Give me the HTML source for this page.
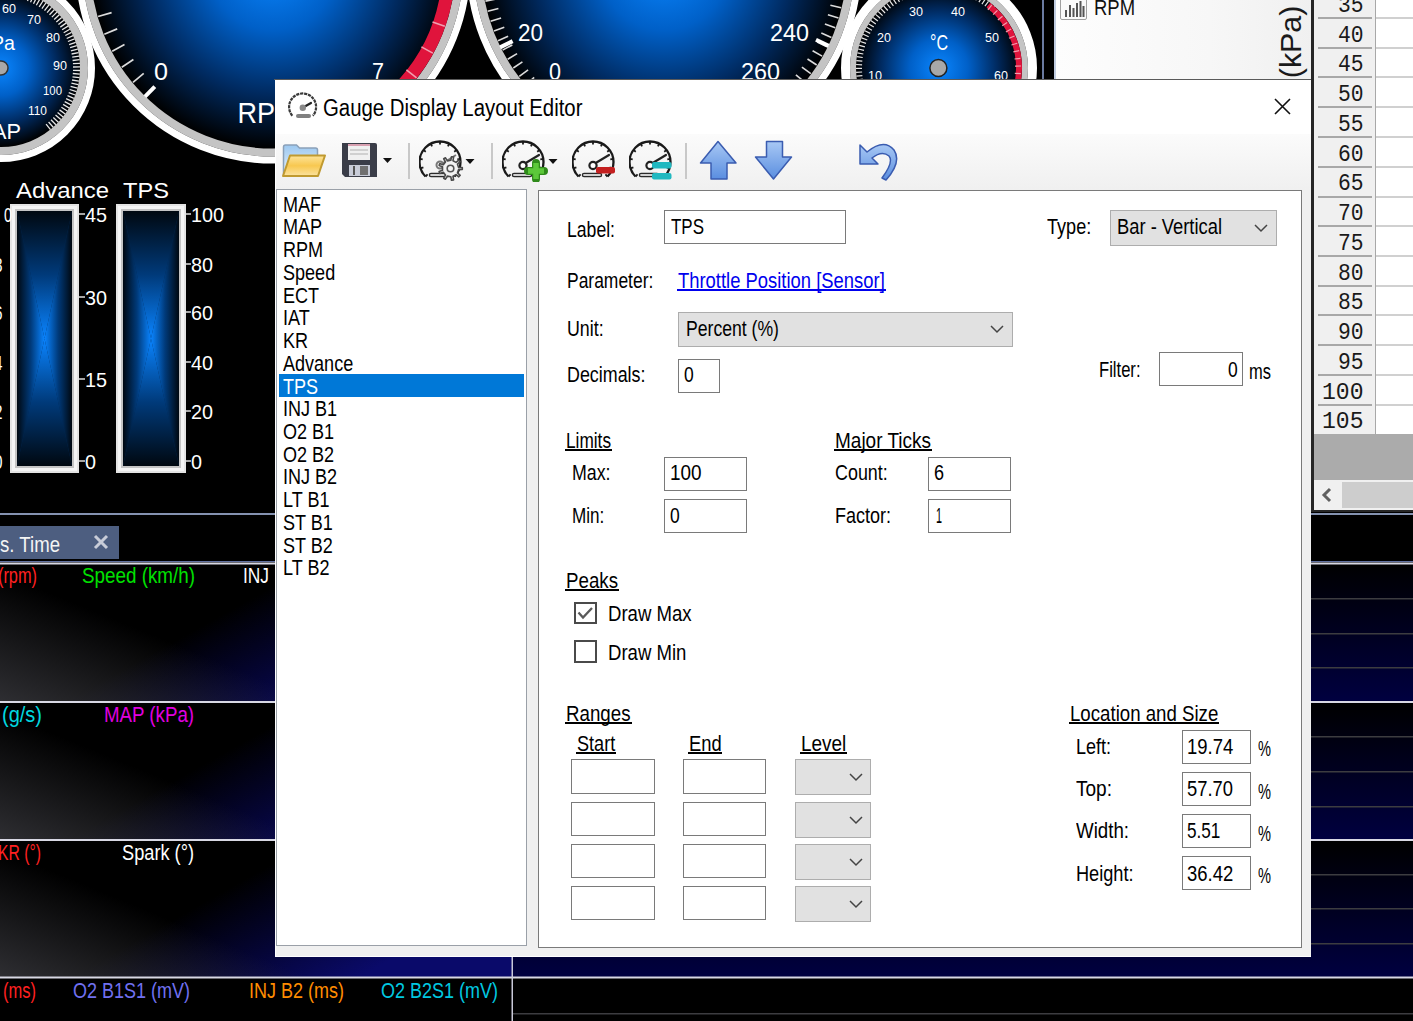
<!DOCTYPE html>
<html><head><meta charset="utf-8">
<style>
html,body{margin:0;padding:0;}
body{width:1413px;height:1021px;overflow:hidden;position:relative;background:#000;font-family:"Liberation Sans", sans-serif;}
.bg{position:absolute;left:0;top:0;}
.t{position:absolute;white-space:pre;transform-origin:0 50%;}
.b{position:absolute;box-sizing:border-box;}
</style></head><body>
<svg class="bg" width="1413" height="1021" font-family="Liberation Sans, sans-serif"><defs>
<radialGradient id="face" cx="50%" cy="50%" r="50%">
 <stop offset="0" stop-color="#0a86ff"/>
 <stop offset="0.35" stop-color="#0060c8"/>
 <stop offset="0.7" stop-color="#002a60"/>
 <stop offset="1" stop-color="#000"/>
</radialGradient>
<linearGradient id="bfv" x1="0" y1="0" x2="0" y2="1">
 <stop offset="0" stop-color="#000810"/>
 <stop offset="0.25" stop-color="#003a7a"/>
 <stop offset="0.5" stop-color="#0a84ff"/>
 <stop offset="0.75" stop-color="#003a7a"/>
 <stop offset="1" stop-color="#000810"/>
</linearGradient>
<linearGradient id="bfh" x1="0" y1="0" x2="1" y2="0">
 <stop offset="0" stop-color="#000810"/>
 <stop offset="0.25" stop-color="#003a7a"/>
 <stop offset="0.5" stop-color="#0a84ff"/>
 <stop offset="0.75" stop-color="#003a7a"/>
 <stop offset="1" stop-color="#000810"/>
</linearGradient>
<linearGradient id="barface" x1="0" y1="0" x2="0" y2="1">
 <stop offset="0" stop-color="#000"/>
 <stop offset="0.5" stop-color="#0a7cf0"/>
 <stop offset="1" stop-color="#000"/>
</linearGradient>
<linearGradient id="barside" x1="0" y1="0" x2="1" y2="0">
 <stop offset="0" stop-color="#000" stop-opacity="0.85"/>
 <stop offset="0.5" stop-color="#000" stop-opacity="0"/>
 <stop offset="1" stop-color="#000" stop-opacity="0.85"/>
</linearGradient>
<linearGradient id="gl" x1="0" y1="0" x2="1" y2="0">
 <stop offset="0" stop-color="#2e2e30"/>
 <stop offset="0.55" stop-color="#161640"/>
 <stop offset="1" stop-color="#000068"/>
</linearGradient>
<linearGradient id="gtop" x1="0" y1="0" x2="0" y2="1">
 <stop offset="0" stop-color="#000" stop-opacity="1"/>
 <stop offset="0.35" stop-color="#000" stop-opacity="1"/>
 <stop offset="1" stop-color="#000" stop-opacity="0"/>
</linearGradient>
<linearGradient id="gr" x1="0" y1="0" x2="0" y2="1">
 <stop offset="0" stop-color="#000000"/>
 <stop offset="1" stop-color="#000040"/>
</linearGradient>
<linearGradient id="panelL" x1="0" y1="0" x2="1" y2="0">
 <stop offset="0" stop-color="#fdfdfd"/>
 <stop offset="0.6" stop-color="#f7f7f7"/>
 <stop offset="1" stop-color="#f0f0f0"/>
</linearGradient>
</defs><rect x="0" y="0" width="1413" height="1021" fill="#000"/><circle cx="1" cy="68" r="79" fill="url(#face)"/><circle cx="1" cy="68" r="83.0" fill="none" stroke="#c4c4c4" stroke-width="8"/><circle cx="1" cy="68" r="90.5" fill="none" stroke="#fff" stroke-width="7"/><line x1="9.3" y1="-10.6" x2="8.5" y2="-3.6" stroke="#e8e8e8" stroke-width="1.3"/><line x1="12.8" y1="-10.1" x2="11.8" y2="-3.2" stroke="#e8e8e8" stroke-width="1.3"/><line x1="16.3" y1="-9.5" x2="15.0" y2="-2.6" stroke="#e8e8e8" stroke-width="1.3"/><line x1="19.8" y1="-8.7" x2="18.2" y2="-1.9" stroke="#e8e8e8" stroke-width="1.3"/><line x1="23.3" y1="-7.8" x2="21.3" y2="-1.1" stroke="#e8e8e8" stroke-width="1.3"/><line x1="26.7" y1="-6.7" x2="24.4" y2="-0.1" stroke="#e8e8e8" stroke-width="1.3"/><line x1="30.1" y1="-5.5" x2="27.5" y2="1.1" stroke="#e8e8e8" stroke-width="1.3"/><line x1="33.4" y1="-4.1" x2="30.5" y2="2.3" stroke="#e8e8e8" stroke-width="1.3"/><line x1="36.6" y1="-2.5" x2="33.5" y2="3.7" stroke="#e8e8e8" stroke-width="1.3"/><line x1="39.8" y1="-0.8" x2="36.3" y2="5.3" stroke="#e8e8e8" stroke-width="1.3"/><line x1="42.9" y1="1.0" x2="39.2" y2="6.9" stroke="#e8e8e8" stroke-width="1.3"/><line x1="45.9" y1="3.0" x2="41.9" y2="8.7" stroke="#e8e8e8" stroke-width="1.3"/><line x1="48.8" y1="5.1" x2="44.5" y2="10.6" stroke="#e8e8e8" stroke-width="1.3"/><line x1="51.6" y1="7.3" x2="47.1" y2="12.7" stroke="#e8e8e8" stroke-width="1.3"/><line x1="54.3" y1="9.7" x2="49.5" y2="14.8" stroke="#e8e8e8" stroke-width="1.3"/><line x1="56.9" y1="12.1" x2="51.9" y2="17.1" stroke="#e8e8e8" stroke-width="1.3"/><line x1="59.3" y1="14.7" x2="54.2" y2="19.5" stroke="#e8e8e8" stroke-width="1.3"/><line x1="61.7" y1="17.4" x2="56.3" y2="21.9" stroke="#e8e8e8" stroke-width="1.3"/><line x1="63.9" y1="20.2" x2="58.4" y2="24.5" stroke="#e8e8e8" stroke-width="1.3"/><line x1="66.0" y1="23.1" x2="60.3" y2="27.1" stroke="#e8e8e8" stroke-width="1.3"/><line x1="68.0" y1="26.1" x2="62.1" y2="29.8" stroke="#e8e8e8" stroke-width="1.3"/><line x1="69.8" y1="29.2" x2="63.7" y2="32.7" stroke="#e8e8e8" stroke-width="1.3"/><line x1="71.5" y1="32.4" x2="65.3" y2="35.5" stroke="#e8e8e8" stroke-width="1.3"/><line x1="73.1" y1="35.6" x2="66.7" y2="38.5" stroke="#e8e8e8" stroke-width="1.3"/><line x1="74.5" y1="38.9" x2="67.9" y2="41.5" stroke="#e8e8e8" stroke-width="1.3"/><line x1="75.7" y1="42.3" x2="69.1" y2="44.6" stroke="#e8e8e8" stroke-width="1.3"/><line x1="76.8" y1="45.7" x2="70.1" y2="47.7" stroke="#e8e8e8" stroke-width="1.3"/><line x1="77.7" y1="49.2" x2="70.9" y2="50.8" stroke="#e8e8e8" stroke-width="1.3"/><line x1="78.5" y1="52.7" x2="71.6" y2="54.0" stroke="#e8e8e8" stroke-width="1.3"/><line x1="79.1" y1="56.2" x2="72.2" y2="57.2" stroke="#e8e8e8" stroke-width="1.3"/><line x1="79.6" y1="59.7" x2="72.6" y2="60.5" stroke="#e8e8e8" stroke-width="1.3"/><line x1="79.9" y1="63.3" x2="72.9" y2="63.7" stroke="#e8e8e8" stroke-width="1.3"/><line x1="80.0" y1="66.9" x2="73.0" y2="67.0" stroke="#e8e8e8" stroke-width="1.3"/><line x1="80.0" y1="70.5" x2="73.0" y2="70.3" stroke="#e8e8e8" stroke-width="1.3"/><line x1="79.8" y1="74.1" x2="72.8" y2="73.5" stroke="#e8e8e8" stroke-width="1.3"/><line x1="79.4" y1="77.6" x2="72.5" y2="76.8" stroke="#e8e8e8" stroke-width="1.3"/><line x1="78.9" y1="81.2" x2="72.0" y2="80.0" stroke="#e8e8e8" stroke-width="1.3"/><line x1="78.2" y1="84.7" x2="71.4" y2="83.2" stroke="#e8e8e8" stroke-width="1.3"/><line x1="77.4" y1="88.2" x2="70.6" y2="86.4" stroke="#e8e8e8" stroke-width="1.3"/><line x1="76.4" y1="91.6" x2="69.7" y2="89.5" stroke="#e8e8e8" stroke-width="1.3"/><line x1="75.2" y1="95.0" x2="68.7" y2="92.6" stroke="#e8e8e8" stroke-width="1.3"/><line x1="73.9" y1="98.4" x2="67.5" y2="95.7" stroke="#e8e8e8" stroke-width="1.3"/><line x1="72.5" y1="101.6" x2="66.1" y2="98.7" stroke="#e8e8e8" stroke-width="1.3"/><line x1="70.9" y1="104.8" x2="64.7" y2="101.6" stroke="#e8e8e8" stroke-width="1.3"/><line x1="69.1" y1="108.0" x2="63.1" y2="104.4" stroke="#e8e8e8" stroke-width="1.3"/><line x1="67.3" y1="111.0" x2="61.4" y2="107.2" stroke="#e8e8e8" stroke-width="1.3"/><line x1="65.2" y1="114.0" x2="59.5" y2="109.9" stroke="#e8e8e8" stroke-width="1.3"/><line x1="63.1" y1="116.9" x2="57.6" y2="112.5" stroke="#e8e8e8" stroke-width="1.3"/><line x1="60.8" y1="119.6" x2="55.5" y2="115.0" stroke="#e8e8e8" stroke-width="1.3"/><line x1="58.4" y1="122.3" x2="53.3" y2="117.5" stroke="#e8e8e8" stroke-width="1.3"/><line x1="55.9" y1="124.8" x2="51.0" y2="119.8" stroke="#e8e8e8" stroke-width="1.3"/><line x1="53.2" y1="127.3" x2="48.6" y2="122.0" stroke="#e8e8e8" stroke-width="1.3"/><line x1="50.5" y1="129.6" x2="46.1" y2="124.1" stroke="#e8e8e8" stroke-width="1.3"/><circle cx="1" cy="68" r="7" fill="#a8a8a8" stroke="#333" stroke-width="1.5"/><text x="2" y="13" font-size="13" fill="#fff" text-anchor="start" textLength="14" lengthAdjust="spacingAndGlyphs">60</text><text x="27" y="24" font-size="13" fill="#fff" text-anchor="start" textLength="14" lengthAdjust="spacingAndGlyphs">70</text><text x="46" y="42" font-size="13" fill="#fff" text-anchor="start" textLength="14" lengthAdjust="spacingAndGlyphs">80</text><text x="53" y="70" font-size="13" fill="#fff" text-anchor="start" textLength="14" lengthAdjust="spacingAndGlyphs">90</text><text x="43" y="95" font-size="13" fill="#fff" text-anchor="start" textLength="19" lengthAdjust="spacingAndGlyphs">100</text><text x="28" y="115" font-size="13" fill="#fff" text-anchor="start" textLength="19" lengthAdjust="spacingAndGlyphs">110</text><text x="-9" y="50" font-size="21" fill="#fff" text-anchor="start" textLength="24" lengthAdjust="spacingAndGlyphs">Pa</text><text x="-8" y="139" font-size="22" fill="#fff" text-anchor="start" textLength="29" lengthAdjust="spacingAndGlyphs">AP</text><circle cx="273" cy="-34" r="182.6" fill="url(#face)"/><circle cx="273" cy="-34" r="186.6" fill="none" stroke="#c4c4c4" stroke-width="8"/><circle cx="273" cy="-34" r="194.1" fill="none" stroke="#fff" stroke-width="7"/><line x1="133.0" y1="82.3" x2="143.7" y2="73.3" stroke="#dcdcdc" stroke-width="1.7"/><line x1="121.8" y1="67.2" x2="133.4" y2="59.5" stroke="#dcdcdc" stroke-width="1.7"/><line x1="112.2" y1="51.2" x2="124.5" y2="44.6" stroke="#dcdcdc" stroke-width="1.7"/><line x1="104.3" y1="34.2" x2="117.2" y2="28.9" stroke="#dcdcdc" stroke-width="1.7"/><line x1="98.1" y1="16.5" x2="111.6" y2="12.6" stroke="#dcdcdc" stroke-width="1.7"/><line x1="93.9" y1="-1.8" x2="107.7" y2="-4.2" stroke="#dcdcdc" stroke-width="1.7"/><line x1="91.5" y1="-20.4" x2="105.5" y2="-21.4" stroke="#dcdcdc" stroke-width="1.7"/><line x1="145.0" y1="96.7" x2="154.8" y2="86.7" stroke="#fff" stroke-width="4"/><path d="M447.3 -9.5 A176 176 0 0 1 318.6 136.0" fill="none" stroke="#e0143c" stroke-width="13"/><line x1="452.2" y1="-2.4" x2="439.4" y2="-4.7" stroke="#f0a0b0" stroke-width="1.6"/><line x1="444.8" y1="26.2" x2="432.5" y2="21.9" stroke="#f0a0b0" stroke-width="1.6"/><line x1="432.8" y1="53.1" x2="421.4" y2="46.9" stroke="#f0a0b0" stroke-width="1.6"/><line x1="416.6" y1="77.8" x2="406.4" y2="69.8" stroke="#f0a0b0" stroke-width="1.6"/><line x1="396.7" y1="99.5" x2="387.8" y2="90.0" stroke="#f0a0b0" stroke-width="1.6"/><line x1="373.5" y1="117.8" x2="366.3" y2="106.9" stroke="#f0a0b0" stroke-width="1.6"/><line x1="347.6" y1="132.0" x2="342.3" y2="120.1" stroke="#f0a0b0" stroke-width="1.6"/><text x="154" y="80" font-size="24" fill="#fff" text-anchor="start" textLength="14" lengthAdjust="spacingAndGlyphs">0</text><text x="372" y="80" font-size="24" fill="#fff" text-anchor="start" textLength="12" lengthAdjust="spacingAndGlyphs">7</text><text x="237.5" y="123.2" font-size="30" fill="#fff" text-anchor="start" textLength="60" lengthAdjust="spacingAndGlyphs">RPM</text><circle cx="664" cy="-34" r="182.6" fill="url(#face)"/><circle cx="664" cy="-34" r="186.6" fill="none" stroke="#c4c4c4" stroke-width="8"/><circle cx="664" cy="-34" r="194.1" fill="none" stroke="#fff" stroke-width="7"/><line x1="632.4" y1="145.2" x2="634.3" y2="134.4" stroke="#dcdcdc" stroke-width="1.6"/><line x1="622.2" y1="143.1" x2="624.7" y2="132.4" stroke="#dcdcdc" stroke-width="1.6"/><line x1="612.1" y1="140.5" x2="615.3" y2="129.9" stroke="#dcdcdc" stroke-width="1.6"/><line x1="602.2" y1="137.2" x2="606.0" y2="126.9" stroke="#dcdcdc" stroke-width="1.6"/><line x1="592.5" y1="133.4" x2="596.9" y2="123.3" stroke="#dcdcdc" stroke-width="1.6"/><line x1="583.1" y1="129.0" x2="588.0" y2="119.2" stroke="#dcdcdc" stroke-width="1.6"/><line x1="573.9" y1="124.1" x2="579.3" y2="114.6" stroke="#dcdcdc" stroke-width="1.6"/><line x1="565.0" y1="118.7" x2="571.0" y2="109.5" stroke="#dcdcdc" stroke-width="1.6"/><line x1="556.4" y1="112.8" x2="562.9" y2="103.9" stroke="#dcdcdc" stroke-width="1.6"/><line x1="548.2" y1="106.4" x2="555.2" y2="97.9" stroke="#dcdcdc" stroke-width="1.6"/><line x1="540.3" y1="99.5" x2="547.8" y2="91.5" stroke="#dcdcdc" stroke-width="1.6"/><line x1="532.9" y1="92.2" x2="540.8" y2="84.6" stroke="#dcdcdc" stroke-width="1.6"/><line x1="525.9" y1="84.5" x2="534.2" y2="77.4" stroke="#dcdcdc" stroke-width="1.6"/><line x1="519.3" y1="76.4" x2="528.1" y2="69.8" stroke="#dcdcdc" stroke-width="1.6"/><line x1="513.3" y1="68.0" x2="522.4" y2="61.8" stroke="#dcdcdc" stroke-width="1.6"/><line x1="507.7" y1="59.2" x2="517.1" y2="53.6" stroke="#dcdcdc" stroke-width="1.6"/><line x1="502.6" y1="50.1" x2="512.3" y2="45.0" stroke="#dcdcdc" stroke-width="1.6"/><line x1="498.0" y1="40.7" x2="508.1" y2="36.2" stroke="#dcdcdc" stroke-width="1.6"/><line x1="494.0" y1="31.1" x2="504.3" y2="27.2" stroke="#dcdcdc" stroke-width="1.6"/><line x1="490.6" y1="21.3" x2="501.1" y2="17.9" stroke="#dcdcdc" stroke-width="1.6"/><line x1="487.7" y1="11.3" x2="498.4" y2="8.5" stroke="#dcdcdc" stroke-width="1.6"/><line x1="485.4" y1="1.1" x2="496.2" y2="-1.0" stroke="#dcdcdc" stroke-width="1.6"/><line x1="843.2" y1="-2.4" x2="832.4" y2="-4.3" stroke="#dcdcdc" stroke-width="1.6"/><line x1="841.1" y1="7.8" x2="830.4" y2="5.3" stroke="#dcdcdc" stroke-width="1.6"/><line x1="838.5" y1="17.9" x2="827.9" y2="14.7" stroke="#dcdcdc" stroke-width="1.6"/><line x1="835.2" y1="27.8" x2="824.9" y2="24.0" stroke="#dcdcdc" stroke-width="1.6"/><line x1="831.4" y1="37.5" x2="821.3" y2="33.1" stroke="#dcdcdc" stroke-width="1.6"/><line x1="827.0" y1="46.9" x2="817.2" y2="42.0" stroke="#dcdcdc" stroke-width="1.6"/><line x1="822.1" y1="56.1" x2="812.6" y2="50.7" stroke="#dcdcdc" stroke-width="1.6"/><line x1="816.7" y1="65.0" x2="807.5" y2="59.0" stroke="#dcdcdc" stroke-width="1.6"/><line x1="810.8" y1="73.6" x2="801.9" y2="67.1" stroke="#dcdcdc" stroke-width="1.6"/><line x1="804.4" y1="81.8" x2="795.9" y2="74.8" stroke="#dcdcdc" stroke-width="1.6"/><line x1="797.5" y1="89.7" x2="789.5" y2="82.2" stroke="#dcdcdc" stroke-width="1.6"/><line x1="790.2" y1="97.1" x2="782.6" y2="89.2" stroke="#dcdcdc" stroke-width="1.6"/><line x1="782.5" y1="104.1" x2="775.4" y2="95.8" stroke="#dcdcdc" stroke-width="1.6"/><line x1="774.4" y1="110.7" x2="767.8" y2="101.9" stroke="#dcdcdc" stroke-width="1.6"/><line x1="766.0" y1="116.7" x2="759.8" y2="107.6" stroke="#dcdcdc" stroke-width="1.6"/><line x1="757.2" y1="122.3" x2="751.6" y2="112.9" stroke="#dcdcdc" stroke-width="1.6"/><line x1="748.1" y1="127.4" x2="743.0" y2="117.7" stroke="#dcdcdc" stroke-width="1.6"/><line x1="738.7" y1="132.0" x2="734.2" y2="121.9" stroke="#dcdcdc" stroke-width="1.6"/><line x1="729.1" y1="136.0" x2="725.2" y2="125.7" stroke="#dcdcdc" stroke-width="1.6"/><line x1="719.3" y1="139.4" x2="715.9" y2="128.9" stroke="#dcdcdc" stroke-width="1.6"/><line x1="709.3" y1="142.3" x2="706.5" y2="131.6" stroke="#dcdcdc" stroke-width="1.6"/><line x1="699.1" y1="144.6" x2="697.0" y2="133.8" stroke="#dcdcdc" stroke-width="1.6"/><line x1="500.1" y1="47.4" x2="512.6" y2="41.1" stroke="#fff" stroke-width="4"/><line x1="828.6" y1="45.9" x2="816.0" y2="39.8" stroke="#fff" stroke-width="4"/><text x="518" y="41" font-size="24" fill="#fff" text-anchor="start" textLength="25" lengthAdjust="spacingAndGlyphs">20</text><text x="549" y="80" font-size="24" fill="#fff" text-anchor="start" textLength="12" lengthAdjust="spacingAndGlyphs">0</text><text x="770" y="41" font-size="24" fill="#fff" text-anchor="start" textLength="39" lengthAdjust="spacingAndGlyphs">240</text><text x="741" y="80" font-size="24" fill="#fff" text-anchor="start" textLength="39" lengthAdjust="spacingAndGlyphs">260</text><circle cx="939" cy="68" r="83" fill="url(#face)"/><circle cx="939" cy="68" r="86.0" fill="none" stroke="#c4c4c4" stroke-width="6"/><circle cx="939" cy="68" r="93.5" fill="none" stroke="#fff" stroke-width="9"/><line x1="867.1" y1="109.5" x2="872.3" y2="106.5" stroke="#e8e8e8" stroke-width="1.2"/><line x1="865.2" y1="106.1" x2="870.6" y2="103.3" stroke="#e8e8e8" stroke-width="1.2"/><line x1="863.5" y1="102.6" x2="869.0" y2="100.1" stroke="#e8e8e8" stroke-width="1.2"/><line x1="862.0" y1="99.0" x2="867.6" y2="96.7" stroke="#e8e8e8" stroke-width="1.2"/><line x1="860.6" y1="95.3" x2="866.3" y2="93.3" stroke="#e8e8e8" stroke-width="1.2"/><line x1="859.4" y1="91.6" x2="865.2" y2="89.9" stroke="#e8e8e8" stroke-width="1.2"/><line x1="858.4" y1="87.8" x2="864.2" y2="86.4" stroke="#e8e8e8" stroke-width="1.2"/><line x1="857.6" y1="84.0" x2="863.4" y2="82.8" stroke="#e8e8e8" stroke-width="1.2"/><line x1="856.9" y1="80.1" x2="862.8" y2="79.2" stroke="#e8e8e8" stroke-width="1.2"/><line x1="856.4" y1="76.2" x2="862.4" y2="75.6" stroke="#e8e8e8" stroke-width="1.2"/><line x1="856.1" y1="72.3" x2="862.1" y2="72.0" stroke="#e8e8e8" stroke-width="1.2"/><line x1="856.0" y1="68.4" x2="862.0" y2="68.4" stroke="#e8e8e8" stroke-width="1.2"/><line x1="856.1" y1="64.5" x2="862.1" y2="64.8" stroke="#e8e8e8" stroke-width="1.2"/><line x1="856.3" y1="60.6" x2="862.3" y2="61.2" stroke="#e8e8e8" stroke-width="1.2"/><line x1="856.8" y1="56.7" x2="862.7" y2="57.5" stroke="#e8e8e8" stroke-width="1.2"/><line x1="857.4" y1="52.9" x2="863.3" y2="54.0" stroke="#e8e8e8" stroke-width="1.2"/><line x1="858.2" y1="49.0" x2="864.0" y2="50.4" stroke="#e8e8e8" stroke-width="1.2"/><line x1="859.2" y1="45.3" x2="864.9" y2="46.9" stroke="#e8e8e8" stroke-width="1.2"/><line x1="860.3" y1="41.5" x2="866.0" y2="43.4" stroke="#e8e8e8" stroke-width="1.2"/><line x1="861.7" y1="37.9" x2="867.3" y2="40.0" stroke="#e8e8e8" stroke-width="1.2"/><line x1="863.2" y1="34.2" x2="868.7" y2="36.7" stroke="#e8e8e8" stroke-width="1.2"/><line x1="864.9" y1="30.7" x2="870.2" y2="33.4" stroke="#e8e8e8" stroke-width="1.2"/><line x1="866.7" y1="27.3" x2="871.9" y2="30.2" stroke="#e8e8e8" stroke-width="1.2"/><line x1="868.7" y1="23.9" x2="873.8" y2="27.1" stroke="#e8e8e8" stroke-width="1.2"/><line x1="870.8" y1="20.6" x2="875.8" y2="24.1" stroke="#e8e8e8" stroke-width="1.2"/><line x1="873.2" y1="17.5" x2="877.9" y2="21.1" stroke="#e8e8e8" stroke-width="1.2"/><line x1="875.6" y1="14.4" x2="880.2" y2="18.3" stroke="#e8e8e8" stroke-width="1.2"/><line x1="878.2" y1="11.5" x2="882.6" y2="15.6" stroke="#e8e8e8" stroke-width="1.2"/><line x1="880.9" y1="8.7" x2="885.1" y2="13.0" stroke="#e8e8e8" stroke-width="1.2"/><line x1="883.8" y1="6.0" x2="887.8" y2="10.5" stroke="#e8e8e8" stroke-width="1.2"/><line x1="886.8" y1="3.5" x2="890.5" y2="8.2" stroke="#e8e8e8" stroke-width="1.2"/><line x1="889.9" y1="1.1" x2="893.4" y2="5.9" stroke="#e8e8e8" stroke-width="1.2"/><line x1="893.1" y1="-1.1" x2="896.4" y2="3.9" stroke="#e8e8e8" stroke-width="1.2"/><line x1="896.4" y1="-3.2" x2="899.5" y2="1.9" stroke="#e8e8e8" stroke-width="1.2"/><line x1="899.8" y1="-5.1" x2="902.6" y2="0.1" stroke="#e8e8e8" stroke-width="1.2"/><line x1="903.3" y1="-6.9" x2="905.9" y2="-1.5" stroke="#e8e8e8" stroke-width="1.2"/><line x1="906.8" y1="-8.5" x2="909.2" y2="-3.0" stroke="#e8e8e8" stroke-width="1.2"/><line x1="910.5" y1="-9.9" x2="912.5" y2="-4.3" stroke="#e8e8e8" stroke-width="1.2"/><line x1="914.2" y1="-11.2" x2="916.0" y2="-5.5" stroke="#e8e8e8" stroke-width="1.2"/><line x1="917.9" y1="-12.3" x2="919.5" y2="-6.5" stroke="#e8e8e8" stroke-width="1.2"/><line x1="921.7" y1="-13.2" x2="923.0" y2="-7.3" stroke="#e8e8e8" stroke-width="1.2"/><line x1="925.6" y1="-13.9" x2="926.6" y2="-8.0" stroke="#e8e8e8" stroke-width="1.2"/><line x1="929.5" y1="-14.4" x2="930.1" y2="-8.5" stroke="#e8e8e8" stroke-width="1.2"/><line x1="933.4" y1="-14.8" x2="933.8" y2="-8.8" stroke="#e8e8e8" stroke-width="1.2"/><line x1="937.3" y1="-15.0" x2="937.4" y2="-9.0" stroke="#e8e8e8" stroke-width="1.2"/><line x1="941.2" y1="-15.0" x2="941.0" y2="-9.0" stroke="#e8e8e8" stroke-width="1.2"/><line x1="945.1" y1="-14.8" x2="944.6" y2="-8.8" stroke="#e8e8e8" stroke-width="1.2"/><line x1="949.0" y1="-14.4" x2="948.3" y2="-8.4" stroke="#e8e8e8" stroke-width="1.2"/><line x1="952.8" y1="-13.8" x2="951.8" y2="-7.9" stroke="#e8e8e8" stroke-width="1.2"/><line x1="956.7" y1="-13.1" x2="955.4" y2="-7.2" stroke="#e8e8e8" stroke-width="1.2"/><line x1="960.5" y1="-12.2" x2="958.9" y2="-6.4" stroke="#e8e8e8" stroke-width="1.2"/><line x1="964.2" y1="-11.1" x2="962.4" y2="-5.4" stroke="#e8e8e8" stroke-width="1.2"/><line x1="967.9" y1="-9.8" x2="965.8" y2="-4.2" stroke="#e8e8e8" stroke-width="1.2"/><line x1="971.6" y1="-8.3" x2="969.2" y2="-2.8" stroke="#e8e8e8" stroke-width="1.2"/><line x1="975.1" y1="-6.7" x2="972.5" y2="-1.3" stroke="#e8e8e8" stroke-width="1.2"/><line x1="978.6" y1="-4.9" x2="975.7" y2="0.3" stroke="#e8e8e8" stroke-width="1.2"/><line x1="982.0" y1="-3.0" x2="978.9" y2="2.1" stroke="#e8e8e8" stroke-width="1.2"/><line x1="985.3" y1="-0.9" x2="981.9" y2="4.1" stroke="#e8e8e8" stroke-width="1.2"/><line x1="988.5" y1="1.4" x2="984.9" y2="6.2" stroke="#e8e8e8" stroke-width="1.2"/><line x1="991.6" y1="3.8" x2="987.8" y2="8.4" stroke="#e8e8e8" stroke-width="1.2"/><line x1="994.5" y1="6.3" x2="990.5" y2="10.8" stroke="#e8e8e8" stroke-width="1.2"/><path d="M988.3 5.0 A80 80 0 0 1 1016.6 87.4" fill="none" stroke="#e0143c" stroke-width="6"/><line x1="991.7" y1="5.2" x2="987.9" y2="9.8" stroke="#f4a0b0" stroke-width="1.2"/><line x1="997.4" y1="10.4" x2="993.1" y2="14.6" stroke="#f4a0b0" stroke-width="1.2"/><line x1="1002.5" y1="16.2" x2="997.9" y2="20.0" stroke="#f4a0b0" stroke-width="1.2"/><line x1="1007.1" y1="22.4" x2="1002.2" y2="25.7" stroke="#f4a0b0" stroke-width="1.2"/><line x1="1011.1" y1="29.0" x2="1005.9" y2="31.9" stroke="#f4a0b0" stroke-width="1.2"/><line x1="1014.5" y1="36.0" x2="1009.0" y2="38.3" stroke="#f4a0b0" stroke-width="1.2"/><line x1="1017.2" y1="43.2" x2="1011.4" y2="45.0" stroke="#f4a0b0" stroke-width="1.2"/><line x1="1019.1" y1="50.7" x2="1013.3" y2="51.9" stroke="#f4a0b0" stroke-width="1.2"/><line x1="1020.4" y1="58.3" x2="1014.5" y2="59.0" stroke="#f4a0b0" stroke-width="1.2"/><line x1="1021.0" y1="66.0" x2="1015.0" y2="66.1" stroke="#f4a0b0" stroke-width="1.2"/><line x1="1020.8" y1="73.7" x2="1014.8" y2="73.3" stroke="#f4a0b0" stroke-width="1.2"/><line x1="1019.9" y1="81.4" x2="1014.0" y2="80.4" stroke="#f4a0b0" stroke-width="1.2"/><circle cx="938.4" cy="68" r="8.5" fill="#a8a8a8" stroke="#222" stroke-width="1.5"/><text x="909" y="16" font-size="13" fill="#fff" text-anchor="start" textLength="14" lengthAdjust="spacingAndGlyphs">30</text><text x="951" y="16" font-size="13" fill="#fff" text-anchor="start" textLength="14" lengthAdjust="spacingAndGlyphs">40</text><text x="877" y="42" font-size="13" fill="#fff" text-anchor="start" textLength="14" lengthAdjust="spacingAndGlyphs">20</text><text x="985" y="42" font-size="13" fill="#fff" text-anchor="start" textLength="14" lengthAdjust="spacingAndGlyphs">50</text><text x="868" y="80" font-size="13" fill="#fff" text-anchor="start" textLength="14" lengthAdjust="spacingAndGlyphs">10</text><text x="994" y="80" font-size="13" fill="#fff" text-anchor="start" textLength="14" lengthAdjust="spacingAndGlyphs">60</text><text x="930" y="50" font-size="22" fill="#fff" text-anchor="start" textLength="18" lengthAdjust="spacingAndGlyphs">°C</text><rect x="10" y="204" width="69" height="269" fill="#e4e4e4"/><rect x="12" y="206" width="65" height="265" fill="#f4f4f4"/><rect x="15" y="209" width="59" height="259" fill="#c4c4c4"/><rect x="17" y="211" width="55" height="255" fill="#002550"/><path d="M17 211 L72 211 L44.5 338.5 Z M17 466 L72 466 L44.5 338.5 Z" fill="url(#bfv)"/><path d="M17 211 L17 466 L44.5 338.5 Z M72 211 L72 466 L44.5 338.5 Z" fill="url(#bfh)"/><rect x="116" y="204" width="70" height="269" fill="#e4e4e4"/><rect x="118" y="206" width="66" height="265" fill="#f4f4f4"/><rect x="121" y="209" width="60" height="259" fill="#c4c4c4"/><rect x="123" y="211" width="56" height="255" fill="#002550"/><path d="M123 211 L179 211 L151.0 338.5 Z M123 466 L179 466 L151.0 338.5 Z" fill="url(#bfv)"/><path d="M123 211 L123 466 L151.0 338.5 Z M179 211 L179 466 L151.0 338.5 Z" fill="url(#bfh)"/><text x="16" y="198" font-size="22" fill="#fff" text-anchor="start" textLength="93" lengthAdjust="spacingAndGlyphs">Advance</text><text x="123" y="198" font-size="22" fill="#fff" text-anchor="start" textLength="46" lengthAdjust="spacingAndGlyphs">TPS</text><line x1="79" y1="214" x2="85" y2="214" stroke="#ddd" stroke-width="1.5"/><text x="85" y="222" font-size="21" fill="#fff" text-anchor="start" textLength="22" lengthAdjust="spacingAndGlyphs">45</text><line x1="79" y1="297" x2="85" y2="297" stroke="#ddd" stroke-width="1.5"/><text x="85" y="305" font-size="21" fill="#fff" text-anchor="start" textLength="22" lengthAdjust="spacingAndGlyphs">30</text><line x1="79" y1="379" x2="85" y2="379" stroke="#ddd" stroke-width="1.5"/><text x="85" y="387" font-size="21" fill="#fff" text-anchor="start" textLength="22" lengthAdjust="spacingAndGlyphs">15</text><line x1="79" y1="461" x2="85" y2="461" stroke="#ddd" stroke-width="1.5"/><text x="85" y="469" font-size="21" fill="#fff" text-anchor="start" textLength="11" lengthAdjust="spacingAndGlyphs">0</text><line x1="186" y1="214" x2="191" y2="214" stroke="#ddd" stroke-width="1.5"/><text x="191" y="222" font-size="21" fill="#fff" text-anchor="start" textLength="33" lengthAdjust="spacingAndGlyphs">100</text><line x1="186" y1="264" x2="191" y2="264" stroke="#ddd" stroke-width="1.5"/><text x="191" y="272" font-size="21" fill="#fff" text-anchor="start" textLength="22" lengthAdjust="spacingAndGlyphs">80</text><line x1="186" y1="312" x2="191" y2="312" stroke="#ddd" stroke-width="1.5"/><text x="191" y="320" font-size="21" fill="#fff" text-anchor="start" textLength="22" lengthAdjust="spacingAndGlyphs">60</text><line x1="186" y1="362" x2="191" y2="362" stroke="#ddd" stroke-width="1.5"/><text x="191" y="370" font-size="21" fill="#fff" text-anchor="start" textLength="22" lengthAdjust="spacingAndGlyphs">40</text><line x1="186" y1="411" x2="191" y2="411" stroke="#ddd" stroke-width="1.5"/><text x="191" y="419" font-size="21" fill="#fff" text-anchor="start" textLength="22" lengthAdjust="spacingAndGlyphs">20</text><line x1="186" y1="461" x2="191" y2="461" stroke="#ddd" stroke-width="1.5"/><text x="191" y="469" font-size="21" fill="#fff" text-anchor="start" textLength="11" lengthAdjust="spacingAndGlyphs">0</text><text x="4" y="222" font-size="21" fill="#fff" text-anchor="start" textLength="8" lengthAdjust="spacingAndGlyphs">0</text><text x="-6" y="272" font-size="21" fill="#fff" text-anchor="start" textLength="8.5" lengthAdjust="spacingAndGlyphs">8</text><text x="-6" y="320" font-size="21" fill="#fff" text-anchor="start" textLength="8.5" lengthAdjust="spacingAndGlyphs">6</text><text x="-6" y="370" font-size="21" fill="#fff" text-anchor="start" textLength="8.5" lengthAdjust="spacingAndGlyphs">4</text><text x="-6" y="419" font-size="21" fill="#fff" text-anchor="start" textLength="8.5" lengthAdjust="spacingAndGlyphs">2</text><text x="-6" y="469" font-size="21" fill="#fff" text-anchor="start" textLength="8.5" lengthAdjust="spacingAndGlyphs">0</text><rect x="1042" y="0" width="2" height="80" fill="#6a7aa0"/><rect x="1054" y="0" width="2" height="80" fill="#c0cce0"/><rect x="1056" y="0" width="256" height="80" fill="url(#panelL)"/><text transform="translate(1301.3,78.2) rotate(-90)" font-size="30" fill="#1a1a1a" textLength="72.5" lengthAdjust="spacingAndGlyphs">(kPa)</text><rect x="0" y="513" width="1413" height="2" fill="#8492b0"/><rect x="0" y="526" width="119" height="33" fill="#4d5e80"/><text x="0" y="552" font-size="22" fill="#f4f4f4" text-anchor="start" textLength="60" lengthAdjust="spacingAndGlyphs">s. Time</text><path d="M95 536 L107 548 M107 536 L95 548" stroke="#c8ccd8" stroke-width="3"/><rect x="0" y="561" width="1413" height="1" fill="#6070a0"/><linearGradient id="ga563" gradientUnits="userSpaceOnUse" x1="45" y1="591" x2="0" y2="702">
 <stop offset="0" stop-color="#2e2e32" stop-opacity="0"/><stop offset="1" stop-color="#2e2e32" stop-opacity="1"/></linearGradient>
<linearGradient id="gb563" gradientUnits="userSpaceOnUse" x1="270" y1="588" x2="340" y2="714">
 <stop offset="0" stop-color="#0a0a6a" stop-opacity="0"/><stop offset="1" stop-color="#0a0a6a" stop-opacity="1"/></linearGradient><rect x="0" y="563" width="512" height="139" fill="#000"/><rect x="0" y="563" width="512" height="139" fill="url(#gb563)"/><rect x="0" y="563" width="512" height="139" fill="url(#ga563)"/><rect x="513" y="563" width="900" height="139" fill="url(#gr)"/><rect x="513" y="598" width="900" height="1.5" fill="#3c3c40"/><rect x="513" y="633" width="900" height="1.5" fill="#3c3c40"/><rect x="513" y="667" width="900" height="1.5" fill="#3c3c40"/><linearGradient id="ga702" gradientUnits="userSpaceOnUse" x1="45" y1="730" x2="0" y2="840">
 <stop offset="0" stop-color="#2e2e32" stop-opacity="0"/><stop offset="1" stop-color="#2e2e32" stop-opacity="1"/></linearGradient>
<linearGradient id="gb702" gradientUnits="userSpaceOnUse" x1="270" y1="727" x2="340" y2="852">
 <stop offset="0" stop-color="#0a0a6a" stop-opacity="0"/><stop offset="1" stop-color="#0a0a6a" stop-opacity="1"/></linearGradient><rect x="0" y="702" width="512" height="138" fill="#000"/><rect x="0" y="702" width="512" height="138" fill="url(#gb702)"/><rect x="0" y="702" width="512" height="138" fill="url(#ga702)"/><rect x="513" y="702" width="900" height="138" fill="url(#gr)"/><rect x="513" y="736" width="900" height="1.5" fill="#3c3c40"/><rect x="513" y="771" width="900" height="1.5" fill="#3c3c40"/><rect x="513" y="806" width="900" height="1.5" fill="#3c3c40"/><linearGradient id="ga840" gradientUnits="userSpaceOnUse" x1="45" y1="868" x2="0" y2="977">
 <stop offset="0" stop-color="#2e2e32" stop-opacity="0"/><stop offset="1" stop-color="#2e2e32" stop-opacity="1"/></linearGradient>
<linearGradient id="gb840" gradientUnits="userSpaceOnUse" x1="270" y1="865" x2="340" y2="989">
 <stop offset="0" stop-color="#0a0a6a" stop-opacity="0"/><stop offset="1" stop-color="#0a0a6a" stop-opacity="1"/></linearGradient><rect x="0" y="840" width="512" height="137" fill="#000"/><rect x="0" y="840" width="512" height="137" fill="url(#gb840)"/><rect x="0" y="840" width="512" height="137" fill="url(#ga840)"/><rect x="513" y="840" width="900" height="137" fill="url(#gr)"/><rect x="513" y="874" width="900" height="1.5" fill="#3c3c40"/><rect x="513" y="908" width="900" height="1.5" fill="#3c3c40"/><rect x="513" y="943" width="900" height="1.5" fill="#3c3c40"/><rect x="0" y="977" width="1413" height="44" fill="#000"/><rect x="513" y="1013" width="900" height="1.5" fill="#3c3c40"/><rect x="0" y="562.5" width="1413" height="2" fill="#d8d8e4"/><rect x="0" y="701" width="1413" height="2" fill="#d8d8e4"/><rect x="0" y="839" width="1413" height="2" fill="#d8d8e4"/><rect x="0" y="976.5" width="1413" height="2" fill="#d8d8e4"/><rect x="511.5" y="563" width="1.5" height="458" fill="#c8c8d8"/><text x="-2" y="583" font-size="22" fill="#ff2020" text-anchor="start" textLength="39" lengthAdjust="spacingAndGlyphs">(rpm)</text><text x="82" y="583" font-size="22" fill="#00e000" text-anchor="start" textLength="113" lengthAdjust="spacingAndGlyphs">Speed (km/h)</text><text x="243" y="583" font-size="22" fill="#ffffff" text-anchor="start" textLength="26" lengthAdjust="spacingAndGlyphs">INJ</text><text x="2" y="722" font-size="22" fill="#00d8e0" text-anchor="start" textLength="40" lengthAdjust="spacingAndGlyphs">(g/s)</text><text x="104" y="722" font-size="22" fill="#e000e0" text-anchor="start" textLength="90" lengthAdjust="spacingAndGlyphs">MAP (kPa)</text><text x="-2" y="860" font-size="22" fill="#ff2020" text-anchor="start" textLength="43" lengthAdjust="spacingAndGlyphs">KR (°)</text><text x="122" y="860" font-size="22" fill="#ffffff" text-anchor="start" textLength="72" lengthAdjust="spacingAndGlyphs">Spark (°)</text><text x="3" y="998" font-size="22" fill="#ff2020" text-anchor="start" textLength="33" lengthAdjust="spacingAndGlyphs">(ms)</text><text x="73" y="998" font-size="22" fill="#7070f0" text-anchor="start" textLength="117" lengthAdjust="spacingAndGlyphs">O2 B1S1 (mV)</text><text x="249" y="998" font-size="22" fill="#ff8c00" text-anchor="start" textLength="95" lengthAdjust="spacingAndGlyphs">INJ B2 (ms)</text><text x="381" y="998" font-size="22" fill="#00c8e0" text-anchor="start" textLength="117" lengthAdjust="spacingAndGlyphs">O2 B2S1 (mV)</text></svg>
<div class="b" style="left:1311px;top:0px;width:3px;height:512px;background:#262626"></div><div class="b" style="left:1314px;top:0px;width:61px;height:434px;background:#f0f0f0"></div><div class="b" style="left:1375px;top:0px;width:1px;height:434px;background:#a8a8a8"></div><div class="b" style="left:1376px;top:0px;width:37px;height:434px;background:#fff"></div><div class="t" style="left:1337.90px;top:-6.24px;font-size:24px;line-height:24px;color:#1a1a1a;transform:scaleX(0.8889);font-family:'Liberation Mono', monospace;">35</div><div class="b" style="left:1318px;top:17px;width:54px;height:1.5px;background:#a8a8a8"></div><div class="b" style="left:1376px;top:17px;width:37px;height:1.5px;background:#d0d0d0"></div><div class="t" style="left:1337.90px;top:23.51px;font-size:24px;line-height:24px;color:#1a1a1a;transform:scaleX(0.8889);font-family:'Liberation Mono', monospace;">40</div><div class="b" style="left:1318px;top:47px;width:54px;height:1.5px;background:#a8a8a8"></div><div class="b" style="left:1376px;top:47px;width:37px;height:1.5px;background:#d0d0d0"></div><div class="t" style="left:1337.90px;top:53.26px;font-size:24px;line-height:24px;color:#1a1a1a;transform:scaleX(0.8889);font-family:'Liberation Mono', monospace;">45</div><div class="b" style="left:1318px;top:76px;width:54px;height:1.5px;background:#a8a8a8"></div><div class="b" style="left:1376px;top:76px;width:37px;height:1.5px;background:#d0d0d0"></div><div class="t" style="left:1337.90px;top:83.01px;font-size:24px;line-height:24px;color:#1a1a1a;transform:scaleX(0.8889);font-family:'Liberation Mono', monospace;">50</div><div class="b" style="left:1318px;top:106px;width:54px;height:1.5px;background:#a8a8a8"></div><div class="b" style="left:1376px;top:106px;width:37px;height:1.5px;background:#d0d0d0"></div><div class="t" style="left:1337.90px;top:112.76px;font-size:24px;line-height:24px;color:#1a1a1a;transform:scaleX(0.8889);font-family:'Liberation Mono', monospace;">55</div><div class="b" style="left:1318px;top:136px;width:54px;height:1.5px;background:#a8a8a8"></div><div class="b" style="left:1376px;top:136px;width:37px;height:1.5px;background:#d0d0d0"></div><div class="t" style="left:1337.90px;top:142.51px;font-size:24px;line-height:24px;color:#1a1a1a;transform:scaleX(0.8889);font-family:'Liberation Mono', monospace;">60</div><div class="b" style="left:1318px;top:166px;width:54px;height:1.5px;background:#a8a8a8"></div><div class="b" style="left:1376px;top:166px;width:37px;height:1.5px;background:#d0d0d0"></div><div class="t" style="left:1337.90px;top:172.26px;font-size:24px;line-height:24px;color:#1a1a1a;transform:scaleX(0.8889);font-family:'Liberation Mono', monospace;">65</div><div class="b" style="left:1318px;top:196px;width:54px;height:1.5px;background:#a8a8a8"></div><div class="b" style="left:1376px;top:196px;width:37px;height:1.5px;background:#d0d0d0"></div><div class="t" style="left:1337.90px;top:202.01px;font-size:24px;line-height:24px;color:#1a1a1a;transform:scaleX(0.8889);font-family:'Liberation Mono', monospace;">70</div><div class="b" style="left:1318px;top:225px;width:54px;height:1.5px;background:#a8a8a8"></div><div class="b" style="left:1376px;top:225px;width:37px;height:1.5px;background:#d0d0d0"></div><div class="t" style="left:1337.90px;top:231.76px;font-size:24px;line-height:24px;color:#1a1a1a;transform:scaleX(0.8889);font-family:'Liberation Mono', monospace;">75</div><div class="b" style="left:1318px;top:255px;width:54px;height:1.5px;background:#a8a8a8"></div><div class="b" style="left:1376px;top:255px;width:37px;height:1.5px;background:#d0d0d0"></div><div class="t" style="left:1337.90px;top:261.51px;font-size:24px;line-height:24px;color:#1a1a1a;transform:scaleX(0.8889);font-family:'Liberation Mono', monospace;">80</div><div class="b" style="left:1318px;top:285px;width:54px;height:1.5px;background:#a8a8a8"></div><div class="b" style="left:1376px;top:285px;width:37px;height:1.5px;background:#d0d0d0"></div><div class="t" style="left:1337.90px;top:291.26px;font-size:24px;line-height:24px;color:#1a1a1a;transform:scaleX(0.8889);font-family:'Liberation Mono', monospace;">85</div><div class="b" style="left:1318px;top:314px;width:54px;height:1.5px;background:#a8a8a8"></div><div class="b" style="left:1376px;top:314px;width:37px;height:1.5px;background:#d0d0d0"></div><div class="t" style="left:1337.90px;top:321.01px;font-size:24px;line-height:24px;color:#1a1a1a;transform:scaleX(0.8889);font-family:'Liberation Mono', monospace;">90</div><div class="b" style="left:1318px;top:344px;width:54px;height:1.5px;background:#a8a8a8"></div><div class="b" style="left:1376px;top:344px;width:37px;height:1.5px;background:#d0d0d0"></div><div class="t" style="left:1337.90px;top:350.76px;font-size:24px;line-height:24px;color:#1a1a1a;transform:scaleX(0.8889);font-family:'Liberation Mono', monospace;">95</div><div class="b" style="left:1318px;top:374px;width:54px;height:1.5px;background:#a8a8a8"></div><div class="b" style="left:1376px;top:374px;width:37px;height:1.5px;background:#d0d0d0"></div><div class="t" style="left:1322.00px;top:380.51px;font-size:24px;line-height:24px;color:#1a1a1a;transform:scaleX(0.9606);font-family:'Liberation Mono', monospace;">100</div><div class="b" style="left:1318px;top:404px;width:54px;height:1.5px;background:#a8a8a8"></div><div class="b" style="left:1376px;top:404px;width:37px;height:1.5px;background:#d0d0d0"></div><div class="t" style="left:1322.00px;top:410.26px;font-size:24px;line-height:24px;color:#1a1a1a;transform:scaleX(0.9606);font-family:'Liberation Mono', monospace;">105</div><div class="b" style="left:1314px;top:434px;width:99px;height:46px;background:#ababab"></div><div class="b" style="left:1314px;top:480px;width:99px;height:30px;background:#f0f0f0"></div><div class="b" style="left:1342px;top:482px;width:71px;height:26px;background:#cdcdcd"></div><svg class="b" style="left:1318px;top:484px" width="20" height="22"><path d="M12 5 L6 11 L12 17" fill="none" stroke="#606060" stroke-width="3"/></svg><div class="b" style="left:1314px;top:510px;width:99px;height:2px;background:#262626"></div><div class="b" style="left:1060px;top:-8px;width:27px;height:28px;border:1.5px solid #a0a0a0;border-radius:2px;background:#fafafa"></div><svg class="b" style="left:1062px;top:0px" width="24" height="18"><g fill="#555"><rect x="3" y="10" width="2" height="7"/><rect x="7" y="5" width="2" height="12"/><rect x="10.5" y="8" width="2" height="9"/><rect x="14" y="3" width="2" height="14"/><rect x="17.5" y="1" width="2" height="16"/><rect x="20.5" y="6" width="2" height="11"/></g></svg><div class="t" style="left:1094.00px;top:-3.43px;font-size:22px;line-height:22px;color:#111;transform:scaleX(0.8395);">RPM</div><div class="b" style="left:274px;top:79px;width:1037px;height:1px;background:#5a5a5a"></div><div class="b" style="left:275px;top:80px;width:1036px;height:877px;background:#f0f0f0;border-left:1px solid #fff;border-bottom:1px solid #fff"></div><div class="b" style="left:275px;top:80px;width:1036px;height:54px;background:#fff"></div><div class="b" style="left:276px;top:134px;width:1035px;height:55px;background:linear-gradient(#fbfbfb,#f0f0f0)"></div><svg class="b" style="left:288px;top:92px" width="30" height="28" viewBox="0 0 30 28">
<path d="M4.3 23.7 A13.5 13.5 0 1 1 24.9 23.7" fill="none" stroke="#3a3a3a" stroke-width="2.2" stroke-dasharray="3.2 0.8"/>
<path d="M10 24 h11" stroke="#808080" stroke-width="4" stroke-linecap="round"/>
<path d="M15 15.5 L23 11" stroke="#222" stroke-width="2.2" stroke-linecap="round"/>
<circle cx="14.8" cy="15.8" r="3.2" fill="#8a8a8a"/>
</svg><div class="t" style="left:322.60px;top:96.70px;font-size:23.5px;line-height:23.5px;color:#000;transform:scaleX(0.8674);">Gauge Display Layout Editor</div><svg class="b" style="left:1274px;top:98px" width="17" height="17"><path d="M1 1 L16 16 M16 1 L1 16" stroke="#111" stroke-width="1.6"/></svg><svg class="b" style="left:280px;top:142px" width="46" height="38" viewBox="0 0 46 38">
<defs><linearGradient id="fold" x1="0" y1="0" x2="0" y2="1"><stop offset="0" stop-color="#fde49a"/><stop offset="0.5" stop-color="#f8c850"/><stop offset="1" stop-color="#fbe3a0"/></linearGradient>
<linearGradient id="foldb" x1="0" y1="0" x2="0" y2="1"><stop offset="0" stop-color="#9cc8f0"/><stop offset="1" stop-color="#e8f2fc"/></linearGradient></defs>
<path d="M3.5 33 V5 q0-2 2-2 h11 l3 3 h16 q2 0 2 2 v6" fill="url(#foldb)" stroke="#8aa0b8" stroke-width="1.5"/>
<path d="M3 34 L10 13.5 H45 L38 34 Z" fill="url(#fold)" stroke="#c09a30" stroke-width="2" stroke-linejoin="round"/>
</svg><svg class="b" style="left:340px;top:141px" width="56" height="38" viewBox="0 0 56 38">
<path d="M2 2 H35 Q37 2 37 4 V36 H5 L2 33 Z" fill="#3a3d48"/>
<rect x="8" y="3" width="22" height="16" fill="#f0f0f0"/><rect x="8" y="3" width="22" height="2" fill="#d8a0b0"/>
<rect x="10" y="8" width="18" height="2" fill="#d0d0d0"/><rect x="10" y="12" width="18" height="2" fill="#d0d0d0"/>
<rect x="9" y="24" width="21" height="11" fill="#c8ccd8"/><rect x="20" y="25" width="8" height="9" fill="#707070"/><rect x="13" y="25" width="2" height="9" fill="#555"/>
<path d="M43 17 h9 l-4.5 5 z" fill="#111"/>
</svg><div class="b" style="left:408px;top:143px;width:1.5px;height:36px;background:#c8c8c8"></div><svg class="b" style="left:419px;top:140px" width="60" height="42" viewBox="0 0 60 42">
<path d="M6.5 36.5 A20.5 20.5 0 1 1 35.5 36.5" fill="none" stroke="#1a1a1a" stroke-width="2.3"/>
<path d="M6.5 36.5 L8.6 34.4 M1.5 28.3 L4.4 27.4 M0.8 18.8 L3.7 19.3 M4.4 10.0 L6.8 11.7 M11.7 3.7 L13.1 6.4 M21.0 1.5 L21.0 4.5 M30.3 3.7 L28.9 6.4 M37.6 10.0 L35.2 11.7 M41.2 18.8 L38.3 19.3 M40.5 28.3 L37.6 27.4 M35.5 36.5 L33.4 34.4 " stroke="#1a1a1a" stroke-width="1.8"/>
<path d="M12 35 h16" stroke="#2a2a2a" stroke-width="4.5" stroke-linecap="round"/>
<path d="M12 35 h16" stroke="#d0d0d0" stroke-width="1.8" stroke-linecap="round"/>
<path d="M21 25 L37 15" stroke="#777" stroke-width="2"/><circle cx="21" cy="25" r="3.5" fill="#fff" stroke="#777" stroke-width="2"/><polygon points="39.6,27.4 43.3,27.5 43.3,29.5 39.6,29.6 38.5,32.8 41.2,35.3 39.8,36.8 37.0,34.6 34.0,36.3 34.6,39.9 32.5,40.3 31.8,36.7 28.4,36.1 26.5,39.2 24.7,38.2 26.5,35.0 24.3,32.3 20.8,33.5 20.1,31.6 23.5,30.2 23.5,26.8 20.1,25.4 20.8,23.5 24.3,24.7 26.5,22.0 24.7,18.8 26.5,17.8 28.4,20.9 31.8,20.3 32.5,16.7 34.6,17.1 34.0,20.7 37.0,22.4 39.8,20.2 41.2,21.7 38.5,24.2" fill="#f2f2f2" stroke="#4a4a4a" stroke-width="1.6" stroke-linejoin="round"/><circle cx="31.5" cy="28.5" r="3.3" fill="none" stroke="#555" stroke-width="1.6"/><path d="M46.5 19 h9 l-4.5 5 z" fill="#111"/>
</svg><div class="b" style="left:491px;top:143px;width:1.5px;height:36px;background:#c8c8c8"></div><svg class="b" style="left:502px;top:140px" width="60" height="42" viewBox="0 0 60 42">
<path d="M6.5 36.5 A20.5 20.5 0 1 1 35.5 36.5" fill="none" stroke="#1a1a1a" stroke-width="2.3"/>
<path d="M6.5 36.5 L8.6 34.4 M1.5 28.3 L4.4 27.4 M0.8 18.8 L3.7 19.3 M4.4 10.0 L6.8 11.7 M11.7 3.7 L13.1 6.4 M21.0 1.5 L21.0 4.5 M30.3 3.7 L28.9 6.4 M37.6 10.0 L35.2 11.7 M41.2 18.8 L38.3 19.3 M40.5 28.3 L37.6 27.4 M35.5 36.5 L33.4 34.4 " stroke="#1a1a1a" stroke-width="1.8"/>
<path d="M12 35 h16" stroke="#2a2a2a" stroke-width="4.5" stroke-linecap="round"/>
<path d="M12 35 h16" stroke="#d0d0d0" stroke-width="1.8" stroke-linecap="round"/>
<path d="M22 24 L37 15" stroke="#222" stroke-width="2.2" stroke-linecap="round"/><circle cx="21" cy="25.5" r="3.6" fill="#fff" stroke="#222" stroke-width="2.2"/><path d="M26 31 h16 M34 23 v16" stroke="#2f8a1a" stroke-width="8" stroke-linecap="round"/><path d="M26 31 h16 M34 23 v16" stroke="#5cc83a" stroke-width="5.5"/><path d="M46.5 19 h9 l-4.5 5 z" fill="#111"/>
</svg><svg class="b" style="left:572px;top:140px" width="46" height="42" viewBox="0 0 46 42">
<path d="M6.5 36.5 A20.5 20.5 0 1 1 35.5 36.5" fill="none" stroke="#1a1a1a" stroke-width="2.3"/>
<path d="M6.5 36.5 L8.6 34.4 M1.5 28.3 L4.4 27.4 M0.8 18.8 L3.7 19.3 M4.4 10.0 L6.8 11.7 M11.7 3.7 L13.1 6.4 M21.0 1.5 L21.0 4.5 M30.3 3.7 L28.9 6.4 M37.6 10.0 L35.2 11.7 M41.2 18.8 L38.3 19.3 M40.5 28.3 L37.6 27.4 M35.5 36.5 L33.4 34.4 " stroke="#1a1a1a" stroke-width="1.8"/>
<path d="M12 35 h16" stroke="#2a2a2a" stroke-width="4.5" stroke-linecap="round"/>
<path d="M12 35 h16" stroke="#d0d0d0" stroke-width="1.8" stroke-linecap="round"/>
<path d="M22 24 L37 15" stroke="#222" stroke-width="2.2" stroke-linecap="round"/><circle cx="21" cy="25.5" r="3.6" fill="#fff" stroke="#222" stroke-width="2.2"/><rect x="24" y="27" width="19" height="6.5" rx="2" fill="#c42020"/>
</svg><svg class="b" style="left:629px;top:140px" width="46" height="42" viewBox="0 0 46 42">
<path d="M6.5 36.5 A20.5 20.5 0 1 1 35.5 36.5" fill="none" stroke="#1a1a1a" stroke-width="2.3"/>
<path d="M6.5 36.5 L8.6 34.4 M1.5 28.3 L4.4 27.4 M0.8 18.8 L3.7 19.3 M4.4 10.0 L6.8 11.7 M11.7 3.7 L13.1 6.4 M21.0 1.5 L21.0 4.5 M30.3 3.7 L28.9 6.4 M37.6 10.0 L35.2 11.7 M41.2 18.8 L38.3 19.3 M40.5 28.3 L37.6 27.4 M35.5 36.5 L33.4 34.4 " stroke="#1a1a1a" stroke-width="1.8"/>
<path d="M12 35 h16" stroke="#2a2a2a" stroke-width="4.5" stroke-linecap="round"/>
<path d="M12 35 h16" stroke="#d0d0d0" stroke-width="1.8" stroke-linecap="round"/>
<path d="M22 24 L37 15" stroke="#222" stroke-width="2.2" stroke-linecap="round"/><circle cx="21" cy="25.5" r="3.6" fill="#fff" stroke="#222" stroke-width="2.2"/><rect x="23" y="22" width="19.5" height="6.5" rx="2" fill="#20b8c0"/><rect x="23" y="33" width="19.5" height="6.5" rx="2" fill="#20b8c0"/>
</svg><div class="b" style="left:685px;top:143px;width:1.5px;height:36px;background:#c8c8c8"></div><svg class="b" style="left:698px;top:139px" width="100" height="42" viewBox="0 0 100 42">
<defs><linearGradient id="arr" x1="0" y1="0" x2="0" y2="1"><stop offset="0" stop-color="#a8c8f4"/><stop offset="1" stop-color="#5a8ee0"/></linearGradient></defs>
<path d="M20 2.5 L38 24 H29 V40 H13 V24 H2.5 Z" fill="url(#arr)" stroke="#3a5cb0" stroke-width="1.5" stroke-linejoin="round"/>
<path d="M76 40 L94 18 H85 V2.5 H69 V18 H58 Z" fill="url(#arr)" stroke="#3a5cb0" stroke-width="1.5" stroke-linejoin="round" transform="translate(-0.5,0)"/>
</svg><svg class="b" style="left:856px;top:140px" width="48" height="42" viewBox="0 0 48 42">
<defs><linearGradient id="und" x1="0" y1="0" x2="0" y2="1"><stop offset="0" stop-color="#a8c8f4"/><stop offset="1" stop-color="#5a8ee0"/></linearGradient></defs>
<path d="M4 5 L4 24 L22 24 L16 18 Q26 10 33 16 Q38 22 26 38 L30 40 Q46 22 38 10 Q28 -2 11 12 Z" fill="url(#und)" stroke="#3a5cb0" stroke-width="1.5" stroke-linejoin="round"/>
</svg><div class="b" style="left:276px;top:189px;width:251px;height:757px;background:#fff;border:1px solid #9aa0a8"></div><div class="b" style="left:278.5px;top:374px;width:245.5px;height:22.5px;background:#0078d7"></div><div class="t" style="left:283.30px;top:193.77px;font-size:22px;line-height:22px;color:#000;transform:scaleX(0.8200);">MAF</div><div class="t" style="left:283.30px;top:216.49px;font-size:22px;line-height:22px;color:#000;transform:scaleX(0.8200);">MAP</div><div class="t" style="left:283.30px;top:239.21px;font-size:22px;line-height:22px;color:#000;transform:scaleX(0.8200);">RPM</div><div class="t" style="left:283.30px;top:261.93px;font-size:22px;line-height:22px;color:#000;transform:scaleX(0.8200);">Speed</div><div class="t" style="left:283.30px;top:284.65px;font-size:22px;line-height:22px;color:#000;transform:scaleX(0.8200);">ECT</div><div class="t" style="left:283.30px;top:307.37px;font-size:22px;line-height:22px;color:#000;transform:scaleX(0.8200);">IAT</div><div class="t" style="left:283.30px;top:330.09px;font-size:22px;line-height:22px;color:#000;transform:scaleX(0.8200);">KR</div><div class="t" style="left:283.30px;top:352.81px;font-size:22px;line-height:22px;color:#000;transform:scaleX(0.8200);">Advance</div><div class="t" style="left:283.30px;top:375.53px;font-size:22px;line-height:22px;color:#fff;transform:scaleX(0.8200);">TPS</div><div class="t" style="left:283.30px;top:398.25px;font-size:22px;line-height:22px;color:#000;transform:scaleX(0.8200);">INJ B1</div><div class="t" style="left:283.30px;top:420.97px;font-size:22px;line-height:22px;color:#000;transform:scaleX(0.8200);">O2 B1</div><div class="t" style="left:283.30px;top:443.69px;font-size:22px;line-height:22px;color:#000;transform:scaleX(0.8200);">O2 B2</div><div class="t" style="left:283.30px;top:466.41px;font-size:22px;line-height:22px;color:#000;transform:scaleX(0.8200);">INJ B2</div><div class="t" style="left:283.30px;top:489.13px;font-size:22px;line-height:22px;color:#000;transform:scaleX(0.8200);">LT B1</div><div class="t" style="left:283.30px;top:511.85px;font-size:22px;line-height:22px;color:#000;transform:scaleX(0.8200);">ST B1</div><div class="t" style="left:283.30px;top:534.57px;font-size:22px;line-height:22px;color:#000;transform:scaleX(0.8200);">ST B2</div><div class="t" style="left:283.30px;top:557.29px;font-size:22px;line-height:22px;color:#000;transform:scaleX(0.8200);">LT B2</div><div class="b" style="left:538px;top:190px;width:764px;height:758px;background:#fff;border:1.5px solid #7a7a7a"></div><div class="t" style="left:566.80px;top:219.27px;font-size:22px;line-height:22px;color:#000;transform:scaleX(0.8007);">Label:</div><div class="b" style="left:663.5px;top:210px;width:182px;height:34px;background:#fff;border:1.5px solid #7a7a7a"></div><div class="t" style="left:671.00px;top:215.77px;font-size:22px;line-height:22px;color:#000;transform:scaleX(0.7712);">TPS</div><div class="t" style="left:1046.80px;top:216.27px;font-size:22px;line-height:22px;color:#000;transform:scaleX(0.8217);">Type:</div><div class="b" style="left:1110px;top:210px;width:167px;height:35.5px;background:#e1e1e1;border:1.5px solid #adadad"></div><svg class="b" style="left:1253px;top:222.75px" width="16" height="10"><path d="M2 2 L8 8 L14 2" fill="none" stroke="#444" stroke-width="1.5"/></svg><div class="t" style="left:1117.40px;top:216.27px;font-size:22px;line-height:22px;color:#000;transform:scaleX(0.8337);">Bar - Vertical</div><div class="t" style="left:566.70px;top:269.77px;font-size:22px;line-height:22px;color:#000;transform:scaleX(0.7933);">Parameter:</div><div class="t" style="left:678.00px;top:269.77px;font-size:22px;line-height:22px;color:#0000ee;transform:scaleX(0.8370);">Throttle Position [Sensor]</div><div class="b" style="left:677.00px;top:289.20px;width:208.80px;height:1.7px;background:#0000ee"></div><div class="t" style="left:566.70px;top:317.57px;font-size:22px;line-height:22px;color:#000;transform:scaleX(0.8096);">Unit:</div><div class="b" style="left:678px;top:311.5px;width:335px;height:35.5px;background:#e1e1e1;border:1.5px solid #adadad"></div><svg class="b" style="left:989px;top:324.25px" width="16" height="10"><path d="M2 2 L8 8 L14 2" fill="none" stroke="#444" stroke-width="1.5"/></svg><div class="t" style="left:685.80px;top:317.77px;font-size:22px;line-height:22px;color:#000;transform:scaleX(0.8006);">Percent (%)</div><div class="t" style="left:566.70px;top:364.27px;font-size:22px;line-height:22px;color:#000;transform:scaleX(0.8128);">Decimals:</div><div class="b" style="left:678px;top:358.5px;width:41.5px;height:34px;background:#fff;border:1.5px solid #7a7a7a"></div><div class="t" style="left:684.00px;top:364.27px;font-size:22px;line-height:22px;color:#000;transform:scaleX(0.7944);">0</div><div class="t" style="left:1098.50px;top:358.77px;font-size:22px;line-height:22px;color:#000;transform:scaleX(0.7545);">Filter:</div><div class="b" style="left:1159px;top:351.5px;width:83.5px;height:34px;background:#fff;border:1.5px solid #7a7a7a"></div><div class="t" style="left:1228.00px;top:358.77px;font-size:22px;line-height:22px;color:#000;transform:scaleX(0.7944);">0</div><div class="t" style="left:1249.00px;top:360.77px;font-size:22px;line-height:22px;color:#000;transform:scaleX(0.7491);">ms</div><div class="t" style="left:566.00px;top:429.77px;font-size:22px;line-height:22px;color:#000;transform:scaleX(0.7837);">Limits</div><div class="b" style="left:565.00px;top:449.20px;width:47.00px;height:1.7px;background:#000"></div><div class="t" style="left:572.00px;top:462.27px;font-size:22px;line-height:22px;color:#000;transform:scaleX(0.8083);">Max:</div><div class="b" style="left:663.8px;top:456.7px;width:83.5px;height:34px;background:#fff;border:1.5px solid #7a7a7a"></div><div class="t" style="left:669.60px;top:462.27px;font-size:22px;line-height:22px;color:#000;transform:scaleX(0.8601);">100</div><div class="t" style="left:572.00px;top:504.77px;font-size:22px;line-height:22px;color:#000;transform:scaleX(0.7768);">Min:</div><div class="b" style="left:663.8px;top:498.8px;width:83.5px;height:34px;background:#fff;border:1.5px solid #7a7a7a"></div><div class="t" style="left:669.60px;top:504.77px;font-size:22px;line-height:22px;color:#000;transform:scaleX(0.7944);">0</div><div class="t" style="left:835.30px;top:429.77px;font-size:22px;line-height:22px;color:#000;transform:scaleX(0.8632);">Major Ticks</div><div class="b" style="left:834.30px;top:449.20px;width:98.00px;height:1.7px;background:#000"></div><div class="t" style="left:835.30px;top:462.27px;font-size:22px;line-height:22px;color:#000;transform:scaleX(0.8134);">Count:</div><div class="b" style="left:927.7px;top:456.7px;width:83.6px;height:34px;background:#fff;border:1.5px solid #7a7a7a"></div><div class="t" style="left:933.80px;top:462.27px;font-size:22px;line-height:22px;color:#000;transform:scaleX(0.8190);">6</div><div class="t" style="left:835.30px;top:504.77px;font-size:22px;line-height:22px;color:#000;transform:scaleX(0.8185);">Factor:</div><div class="b" style="left:927.7px;top:498.8px;width:83.6px;height:34px;background:#fff;border:1.5px solid #7a7a7a"></div><div class="t" style="left:935.50px;top:504.77px;font-size:22px;line-height:22px;color:#000;transform:scaleX(0.4914);">1</div><div class="t" style="left:566.00px;top:569.77px;font-size:22px;line-height:22px;color:#000;transform:scaleX(0.8502);">Peaks</div><div class="b" style="left:565.00px;top:589.20px;width:54.00px;height:1.7px;background:#000"></div><div class="b" style="left:574px;top:601.5px;width:23px;height:22.5px;background:#fff;border:2px solid #4a4a4a"></div><svg class="b" style="left:576px;top:603px" width="20" height="19"><path d="M2.5 9.5 L7 14.5 L16 5" fill="none" stroke="#5a5a5a" stroke-width="2.3"/></svg><div class="t" style="left:608.40px;top:602.97px;font-size:22px;line-height:22px;color:#000;transform:scaleX(0.8444);">Draw Max</div><div class="b" style="left:574px;top:640.2px;width:23px;height:22.5px;background:#fff;border:2px solid #4a4a4a"></div><div class="t" style="left:608.40px;top:641.57px;font-size:22px;line-height:22px;color:#000;transform:scaleX(0.8445);">Draw Min</div><div class="t" style="left:566.00px;top:702.97px;font-size:22px;line-height:22px;color:#000;transform:scaleX(0.8510);">Ranges</div><div class="b" style="left:565.00px;top:722.40px;width:66.50px;height:1.7px;background:#000"></div><div class="t" style="left:576.80px;top:732.77px;font-size:22px;line-height:22px;color:#000;transform:scaleX(0.8229);">Start</div><div class="b" style="left:575.80px;top:752.20px;width:40.20px;height:1.7px;background:#000"></div><div class="t" style="left:688.70px;top:732.77px;font-size:22px;line-height:22px;color:#000;transform:scaleX(0.8350);">End</div><div class="b" style="left:687.70px;top:752.20px;width:34.70px;height:1.7px;background:#000"></div><div class="t" style="left:800.70px;top:732.77px;font-size:22px;line-height:22px;color:#000;transform:scaleX(0.8615);">Level</div><div class="b" style="left:799.70px;top:752.20px;width:47.30px;height:1.7px;background:#000"></div><div class="b" style="left:571px;top:759.4px;width:83.5px;height:34.3px;background:#fff;border:1.5px solid #7a7a7a"></div><div class="b" style="left:683px;top:759.4px;width:83.3px;height:34.3px;background:#fff;border:1.5px solid #7a7a7a"></div><div class="b" style="left:795.2px;top:759.4px;width:76.3px;height:36px;background:#e1e1e1;border:1.5px solid #adadad"></div><svg class="b" style="left:847.5px;top:772.4px" width="16" height="10"><path d="M2 2 L8 8 L14 2" fill="none" stroke="#444" stroke-width="1.5"/></svg><div class="b" style="left:571px;top:801.5px;width:83.5px;height:34.3px;background:#fff;border:1.5px solid #7a7a7a"></div><div class="b" style="left:683px;top:801.5px;width:83.3px;height:34.3px;background:#fff;border:1.5px solid #7a7a7a"></div><div class="b" style="left:795.2px;top:801.5px;width:76.3px;height:36px;background:#e1e1e1;border:1.5px solid #adadad"></div><svg class="b" style="left:847.5px;top:814.5px" width="16" height="10"><path d="M2 2 L8 8 L14 2" fill="none" stroke="#444" stroke-width="1.5"/></svg><div class="b" style="left:571px;top:843.6px;width:83.5px;height:34.3px;background:#fff;border:1.5px solid #7a7a7a"></div><div class="b" style="left:683px;top:843.6px;width:83.3px;height:34.3px;background:#fff;border:1.5px solid #7a7a7a"></div><div class="b" style="left:795.2px;top:843.6px;width:76.3px;height:36px;background:#e1e1e1;border:1.5px solid #adadad"></div><svg class="b" style="left:847.5px;top:856.6px" width="16" height="10"><path d="M2 2 L8 8 L14 2" fill="none" stroke="#444" stroke-width="1.5"/></svg><div class="b" style="left:571px;top:885.7px;width:83.5px;height:34.3px;background:#fff;border:1.5px solid #7a7a7a"></div><div class="b" style="left:683px;top:885.7px;width:83.3px;height:34.3px;background:#fff;border:1.5px solid #7a7a7a"></div><div class="b" style="left:795.2px;top:885.7px;width:76.3px;height:36px;background:#e1e1e1;border:1.5px solid #adadad"></div><svg class="b" style="left:847.5px;top:898.7px" width="16" height="10"><path d="M2 2 L8 8 L14 2" fill="none" stroke="#444" stroke-width="1.5"/></svg><div class="t" style="left:1070.00px;top:702.77px;font-size:22px;line-height:22px;color:#000;transform:scaleX(0.8479);">Location and Size</div><div class="b" style="left:1069.00px;top:722.20px;width:150.30px;height:1.7px;background:#000"></div><div class="t" style="left:1075.70px;top:736.27px;font-size:22px;line-height:22px;color:#000;transform:scaleX(0.8179);">Left:</div><div class="b" style="left:1182px;top:729.7px;width:69px;height:34px;background:#fff;border:1.5px solid #7a7a7a"></div><div class="t" style="left:1187.40px;top:736.27px;font-size:22px;line-height:22px;color:#000;transform:scaleX(0.8401);">19.74</div><div class="t" style="left:1258.00px;top:738.47px;font-size:22px;line-height:22px;color:#000;transform:scaleX(0.6639);">%</div><div class="t" style="left:1075.70px;top:778.37px;font-size:22px;line-height:22px;color:#000;transform:scaleX(0.8658);">Top:</div><div class="b" style="left:1182px;top:771.8000000000001px;width:69px;height:34px;background:#fff;border:1.5px solid #7a7a7a"></div><div class="t" style="left:1187.40px;top:778.37px;font-size:22px;line-height:22px;color:#000;transform:scaleX(0.8347);">57.70</div><div class="t" style="left:1258.00px;top:780.57px;font-size:22px;line-height:22px;color:#000;transform:scaleX(0.6639);">%</div><div class="t" style="left:1075.70px;top:820.47px;font-size:22px;line-height:22px;color:#000;transform:scaleX(0.8498);">Width:</div><div class="b" style="left:1182px;top:813.9000000000001px;width:69px;height:34px;background:#fff;border:1.5px solid #7a7a7a"></div><div class="t" style="left:1187.40px;top:820.47px;font-size:22px;line-height:22px;color:#000;transform:scaleX(0.7806);">5.51</div><div class="t" style="left:1258.00px;top:822.67px;font-size:22px;line-height:22px;color:#000;transform:scaleX(0.6639);">%</div><div class="t" style="left:1075.70px;top:862.57px;font-size:22px;line-height:22px;color:#000;transform:scaleX(0.8259);">Height:</div><div class="b" style="left:1182px;top:856.0px;width:69px;height:34px;background:#fff;border:1.5px solid #7a7a7a"></div><div class="t" style="left:1187.40px;top:862.57px;font-size:22px;line-height:22px;color:#000;transform:scaleX(0.8401);">36.42</div><div class="t" style="left:1258.00px;top:864.77px;font-size:22px;line-height:22px;color:#000;transform:scaleX(0.6639);">%</div>
</body></html>
